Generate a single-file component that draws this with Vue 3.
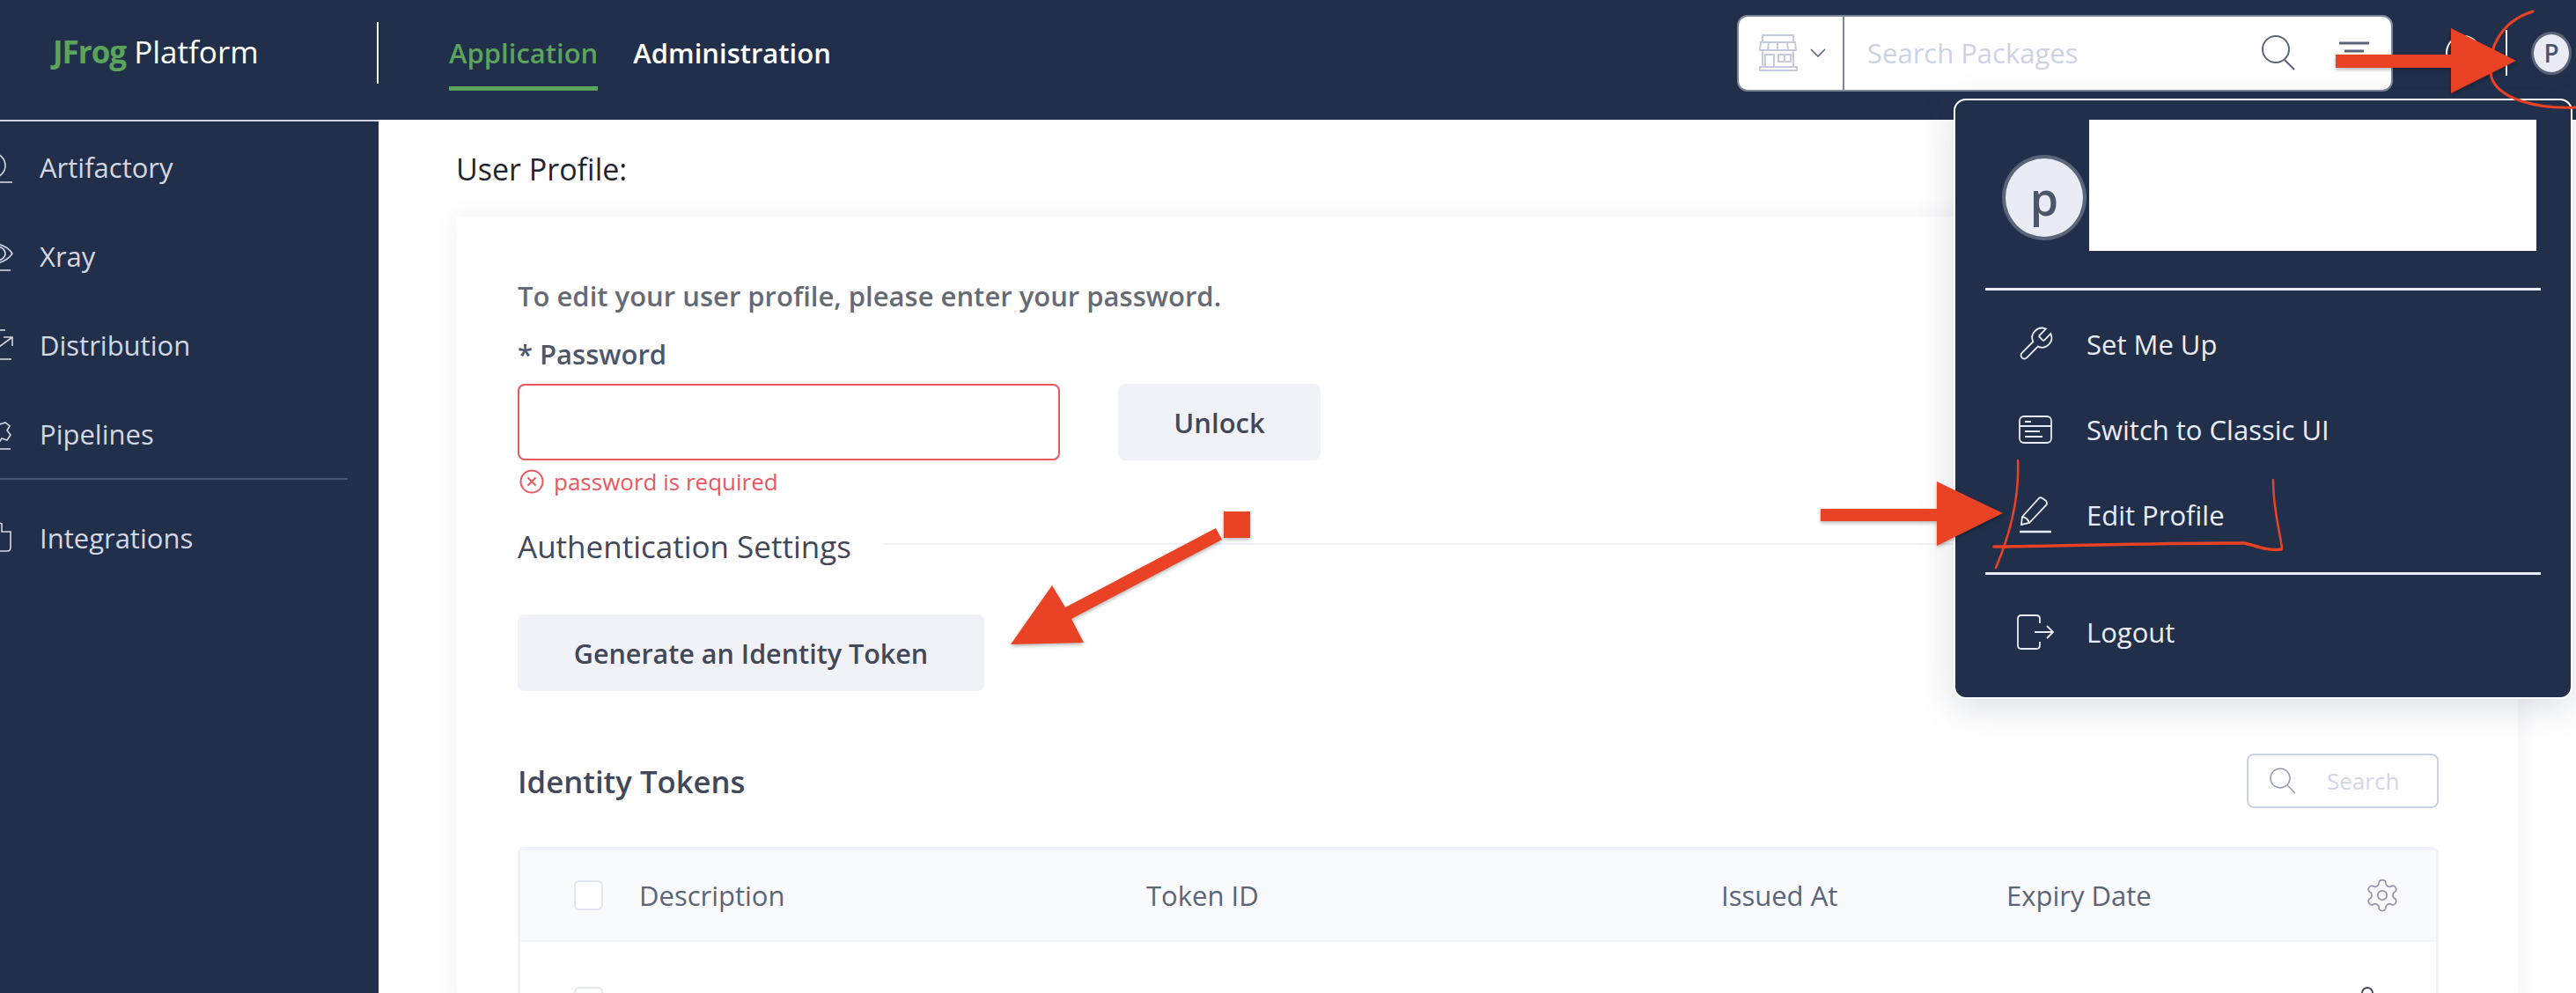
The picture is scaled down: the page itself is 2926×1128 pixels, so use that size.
<script setup>
const sideItems = [
  { label: "Artifactory", paths: ["M-8 3a14 14 0 1 1 0 28", "M-16 36H14"] },
  { label: "Xray", paths: ["M-14 4Q6 4 14 16Q6 28 -14 28", "M-4 8a10 8 0 1 1 0 16", "M-16 35H12"] },
  { label: "Distribution", paths: ["M-16 2H6", "M-8 26L14 10M4 10H14V20", "M-16 35H13"] },
  { label: "Pipelines", paths: ["M-8 2L-2 3L0 8L6 6L11 10L8 15L12 20L8 26L2 24L-2 30L-8 30", "M-8 9a7 7 0 1 1 0 14", "M-16 36H12"] },
]
const menuItems = [
  { label: "Set Me Up", icon: "wrench" },
  { label: "Switch to Classic UI", icon: "window" },
  { label: "Edit Profile", icon: "pencil" },
]
const columns = ["Description", "Token ID", "Issued At", "Expiry Date"]
const gearPath = "M12.22 2h-.44a2 2 0 0 0-2 2v.18a2 2 0 0 1-1 1.73l-.43.25a2 2 0 0 1-2 0l-.15-.08a2 2 0 0 0-2.73.73l-.22.38a2 2 0 0 0 .73 2.73l.15.1a2 2 0 0 1 1 1.72v.51a2 2 0 0 1-1 1.74l-.15.09a2 2 0 0 0-.73 2.73l.22.38a2 2 0 0 0 2.73.73l.15-.08a2 2 0 0 1 2 0l.43.25a2 2 0 0 1 1 1.73V20a2 2 0 0 0 2 2h.44a2 2 0 0 0 2-2v-.18a2 2 0 0 1 1-1.73l.43-.25a2 2 0 0 1 2 0l.15.08a2 2 0 0 0 2.73-.73l.22-.39a2 2 0 0 0-.73-2.73l-.15-.08a2 2 0 0 1-1-1.74v-.5a2 2 0 0 1 1-1.74l.15-.09a2 2 0 0 0 .73-2.73l-.22-.38a2 2 0 0 0-2.73-.73l-.15.08a2 2 0 0 1-2 0l-.43-.25a2 2 0 0 1-1-1.73V4a2 2 0 0 0-2-2z"
</script>

<template>
  <div class="page">
    <!-- top bar -->
    <header class="topbar">
      <div class="logo"><b>JFrog</b> Platform</div>
      <span class="vline tall"></span>
      <nav class="tabs">
        <a class="tab active">Application</a>
        <a class="tab">Administration</a>
      </nav>

      <div class="pkg-search">
        <div class="pkg-type">
          <svg width="44" height="42" viewBox="0 0 44 42" fill="none" stroke="#c6cade" stroke-width="2">
            <path d="M4 1H39V9H4ZM2 9H41L42 18H1ZM4 18V37M39 18V37M1 37H43V41H1Z" />
            <path d="M7 37V23H17V37M22 23H36V31H22ZM29 23V31M11 9L10 18M21 9V18M32 9L33 18" />
          </svg>
          <svg width="18" height="10" viewBox="0 0 18 10" fill="none" stroke="#5b6478" stroke-width="1.6">
            <path d="M1 1L9 9L17 1" />
          </svg>
        </div>
        <span class="pkg-placeholder">Search Packages</span>
        <svg class="pkg-glass" width="42" height="40" viewBox="0 0 42 40" fill="none" stroke="#5b6478" stroke-width="2">
          <circle cx="17" cy="16" r="15" />
          <path d="M27 28L38 39" />
        </svg>
        <svg class="pkg-filter" width="36" height="28" viewBox="0 0 36 28" fill="none" stroke="#5b6478" stroke-width="3">
          <path d="M1 3H35M7 12H29M12 21H24" />
        </svg>
      </div>

      <span class="help"></span>
      <span class="vline short"></span>
      <span class="avatar small">P</span>
    </header>

    <div class="body">
      <!-- left nav, icons cut off by the window edge -->
      <aside class="sidebar">
        <div v-for="item in sideItems" :key="item.label" class="side-item">
          <svg width="32" height="38" viewBox="-16 0 32 38" fill="none" stroke="#d3d7e2" stroke-width="1.6">
            <path v-for="d in item.paths" :key="d" :d="d" />
          </svg>
          <span>{{ item.label }}</span>
        </div>
        <div class="side-sep"></div>
        <div class="side-item">
          <svg width="32" height="38" viewBox="-16 0 32 38" fill="none" stroke="#d3d7e2" stroke-width="1.6">
            <path d="M-16 12H-6V3Q-2 1 2 3V12H12V30Q12 34 8 34H-16" />
          </svg>
          <span>Integrations</span>
        </div>
      </aside>

      <main class="main">
        <h1 class="title">User Profile:</h1>
        <section class="card">
          <p class="hint">To edit your user profile, please enter your password.</p>
          <label class="field-label">* Password</label>
          <div class="pw-row">
            <div class="pw-input"></div>
            <button class="btn unlock">Unlock</button>
          </div>
          <div class="error">
            <svg width="28" height="28" viewBox="0 0 28 28" fill="none" stroke="#e9585f" stroke-width="2">
              <circle cx="14" cy="14" r="12.5" />
              <path d="M9.5 9.5L18.5 18.5M18.5 9.5L9.5 18.5" />
            </svg>
            <span>password is required</span>
          </div>

          <div class="auth-head">
            <h2>Authentication Settings</h2>
            <span class="auth-line"></span>
          </div>
          <button class="btn generate">Generate an Identity Token</button>

          <div class="tokens-head">
            <h3>Identity Tokens</h3>
            <div class="mini-search">
              <svg width="30" height="30" viewBox="0 0 30 30" fill="none" stroke="#9b9fb8" stroke-width="1.6">
                <circle cx="12" cy="12" r="11" />
                <path d="M20 20L29 29" />
              </svg>
              <span>Search</span>
            </div>
          </div>

          <div class="table">
            <div class="row head">
              <span class="check"></span>
              <span v-for="c in columns" :key="c">{{ c }}</span>
              <svg class="gear" width="42" height="42" viewBox="0 0 24 24" fill="none" stroke="#9195ae" stroke-width="1">
                <path :d="gearPath" />
                <circle cx="12" cy="12" r="3" />
              </svg>
            </div>
            <div class="row">
              <span class="check"></span>
              <span class="kebab"></span>
            </div>
          </div>
        </section>
      </main>
    </div>

    <!-- account dropdown -->
    <div class="dropdown">
      <div class="dd-head">
        <span class="avatar large">p</span>
        <div class="dd-blank"></div>
      </div>
      <div class="dd-sep first"></div>
      <div v-for="m in menuItems" :key="m.label" class="dd-item">
        <span class="dd-icon">
          <svg v-if="m.icon === 'wrench'" width="48" height="48" viewBox="0 0 24 24" fill="none" stroke="#e9ecf5" stroke-width="1">
            <path d="M14.7 6.3a1 1 0 0 0 0 1.4l1.6 1.6a1 1 0 0 0 1.4 0l3.77-3.77a6 6 0 0 1-7.94 7.94l-6.91 6.91a2.12 2.12 0 0 1-3-3l6.91-6.91a6 6 0 0 1 7.94-7.94l-3.76 3.76z" />
          </svg>
          <svg v-else-if="m.icon === 'window'" width="38" height="32" viewBox="0 0 38 32" fill="none" stroke="#e9ecf5" stroke-width="1.8">
            <rect x="1" y="1" width="36" height="30" rx="5" />
            <path d="M1 12H37M7 7H14M7 18H24M7 24H27" />
          </svg>
          <svg v-else width="38" height="42" viewBox="0 0 38 42" fill="none" stroke="#e9ecf5" stroke-width="1.8">
            <path d="M4 23L22 3Q24 0 27 2L31 5Q33 8 31 10L12 30L3 32Z" />
            <path d="M4 23Q10 24 12 30" />
            <path d="M1 40H37" stroke-width="2.4" />
          </svg>
        </span>
        <span>{{ m.label }}</span>
      </div>
      <div class="dd-sep last"></div>
      <div class="dd-item">
        <span class="dd-icon">
          <svg width="44" height="40" viewBox="0 0 44 40" fill="none" stroke="#e9ecf5" stroke-width="1.8">
            <path d="M27 10V5Q27 1 23 1H6Q2 1 2 5V35Q2 39 6 39H23Q27 39 27 35V31" />
            <path d="M21 20H42M35 13L42 20L35 27" />
          </svg>
        </span>
        <span>Logout</span>
      </div>
    </div>

    <!-- red markup drawn on top of the screenshot -->
    <svg class="markup" width="2926" height="1128" viewBox="0 0 2926 1128">
      <g fill="#e94225" class="arrows">
        <path d="M2653 62H2784V32L2858 69L2784 106V77H2653Z" />
        <path d="M2068 578H2200V547L2275 583L2200 620V592H2068Z" />
        <path d="M1390 581H1420V611H1390Z" />
        <path d="M1381 600L1388 613L1217 703L1231 730L1148 732L1195 665L1210 690Z" />
      </g>
      <g fill="none" stroke="#e94225" stroke-linecap="round">
        <path d="M2877 13C2838 25 2824 60 2830 88C2838 112 2880 124 2926 122" stroke-width="3" />
        <path d="M2292 523C2294 570 2282 610 2267 645" stroke-width="2.5" />
        <path d="M2265 621C2350 620 2480 616 2550 617C2562 620 2575 626 2591 624" stroke-width="3.5" />
        <path d="M2582 545C2582 580 2590 605 2592 623" stroke-width="2.5" />
      </g>
    </svg>
  </div>
</template>

<style>
html, body {
  margin: 0;
  background: #fff;
}
</style>

<style scoped>
* {
  box-sizing: border-box;
}

.page {
  position: relative;
  width: 2926px;
  height: 1128px;
  overflow: hidden;
  font-family: "Open Sans", "Liberation Sans", sans-serif;
  font-size: 31px;
  color: #414859;
}

/* top bar */
.topbar {
  height: 136px;
  padding: 0 5px 16px 60px;
  display: flex;
  align-items: center;
  background: #212f4b;
}
.logo {
  width: 368px;
  margin-top: -4px;
  font-size: 35px;
  color: #fff;
  white-space: pre;
}
.logo b {
  color: #5aa45c;
  font-weight: 700;
  letter-spacing: -1px;
}
.vline {
  width: 2px;
  background: #fff;
  flex: none;
}
.vline.tall {
  height: 70px;
}
.vline.short {
  height: 52px;
  margin-left: 28px;
}
.tabs {
  display: flex;
  gap: 40px;
  margin-left: 80px;
}
.tab {
  height: 86px;
  padding-top: 5px;
  display: flex;
  align-items: center;
  border-bottom: 5px solid transparent;
  color: #fff;
  font-size: 31px;
  font-weight: 600;
}
.tab.active {
  color: #5aa45c;
  border-bottom-color: #5aa45c;
}
.pkg-search {
  width: 745px;
  height: 87px;
  margin-left: auto;
  display: flex;
  align-items: center;
  background: #fff;
  border: 2px solid #7d8599;
  border-radius: 12px;
}
.pkg-type {
  width: 120px;
  height: 100%;
  padding-left: 23px;
  display: flex;
  align-items: center;
  gap: 14px;
  border-right: 2px solid #7d8599;
}
.pkg-placeholder {
  margin-left: 26px;
  color: #ced2e4;
  font-size: 31px;
}
.pkg-glass {
  margin-left: auto;
}
.pkg-filter {
  margin: 0 24px 0 46px;
}
.help {
  width: 40px;
  height: 40px;
  margin-left: 60px;
  border: 2px solid #fff;
  border-radius: 50%;
}
.avatar {
  flex: none;
  display: flex;
  align-items: center;
  justify-content: center;
  border-radius: 50%;
  background: #e9ecf5;
  color: #4c566b;
  font-weight: 600;
}
.avatar.small {
  width: 46px;
  height: 49px;
  margin-left: 27px;
  border: 3px solid #5b6478;
  font-size: 28px;
}
.avatar.large {
  width: 96px;
  height: 97px;
  margin-top: 40px;
  border: 4px solid #5b6478;
  font-size: 52px;
}

/* sidebar + content */
.body {
  height: 992px;
  display: flex;
}
.sidebar {
  width: 430px;
  flex: none;
  padding-top: 1px;
  overflow: hidden;
  background: #212f4b;
  border-top: 2px solid #cfd3dc;
}
.side-item {
  height: 101px;
  display: flex;
  align-items: center;
  gap: 29px;
  color: #d3d7e2;
  font-size: 31px;
}
.side-item svg {
  margin-left: -16px;
  flex: none;
}
.side-sep {
  width: 395px;
  height: 2px;
  margin-bottom: 15px;
  background: #4a556d;
}
.main {
  flex: 1;
  min-width: 0;
  padding: 0 66px 0 88px;
}
.title {
  margin: 0;
  height: 110px;
  padding-top: 34px;
  font-size: 34px;
  line-height: 44px;
  font-weight: 400;
  color: #1f2430;
}
.card {
  height: 900px;
  padding: 70px 90px 0 70px;
  background: #fff;
  box-shadow: 0 0 24px rgba(60, 70, 100, 0.08);
}
.hint {
  margin: 0;
  height: 40px;
  line-height: 40px;
  color: #666a75;
  font-size: 31px;
  font-weight: 600;
}
.field-label {
  display: block;
  margin-top: 26px;
  height: 40px;
  line-height: 40px;
  color: #4c566b;
  font-weight: 600;
}
.pw-row {
  display: flex;
  gap: 66px;
  margin-top: 14px;
}
.pw-input {
  width: 616px;
  height: 87px;
  border: 2px solid #e9585f;
  border-radius: 8px;
}
.btn {
  display: block;
  border: 0;
  border-radius: 8px;
  background: #f1f2f8;
  color: #414859;
  font-family: inherit;
  font-size: 31px;
  font-weight: 600;
}
.generate {
  width: 530px;
  height: 87px;
  margin-top: 56px;
  font-size: 30.5px;
}
.unlock {
  width: 230px;
  height: 87px;
}
.error {
  display: flex;
  align-items: center;
  gap: 11px;
  height: 30px;
  margin: 9px 0 0 2px;
  color: #e9585f;
  font-size: 26px;
}
.auth-head {
  display: flex;
  align-items: center;
  gap: 35px;
  margin-top: 36px;
  height: 44px;
}
.auth-head h2 {
  margin: 0;
  font-size: 35px;
  font-weight: 400;
  color: #414859;
}
.auth-line {
  flex: 1;
  height: 2px;
  margin-top: -4px;
  background: #f1f2f8;
}
.tokens-head {
  display: flex;
  align-items: center;
  justify-content: space-between;
  margin-top: 71px;
  height: 62px;
}
.tokens-head h3 {
  margin: 0;
  font-size: 34.7px;
  font-weight: 600;
  color: #414859;
}
.mini-search {
  width: 218px;
  height: 62px;
  padding-left: 24px;
  display: flex;
  align-items: center;
  gap: 35px;
  border: 2px solid #cdd1e4;
  border-radius: 8px;
  color: #d2d6e6;
  font-size: 26px;
}
.table {
  margin-top: 44px;
  border: 3px solid #f1f2f8;
  border-top-width: 4px;
  border-bottom: 0;
  border-radius: 8px 8px 0 0;
}
.row {
  display: grid;
  grid-template-columns: 74px 576px 653px 324px 1fr auto;
  align-items: center;
  padding-left: 61px;
}
.row.head {
  height: 104px;
  background: #f9fafc;
  border-bottom: 2px solid #f1f2f8;
  color: #5b6478;
  font-size: 31px;
}
.row:not(.head) {
  height: 120px;
  align-items: start;
  padding-top: 51px;
}
.check {
  width: 33px;
  height: 34px;
  background: #fff;
  border: 2px solid #e4e6f2;
  border-radius: 6px;
}
.gear {
  margin-right: 40px;
}
.kebab {
  grid-column: 6;
  width: 14px;
  height: 14px;
  margin-right: 71px;
  border: 2px solid #414859;
  border-radius: 50%;
}

/* dropdown */
.dropdown {
  position: absolute;
  top: 112px;
  left: 2219px;
  width: 703px;
  height: 682px;
  padding: 22px 34px 0;
  background: #212f4b;
  border: 2px solid #fff;
  border-radius: 14px;
  box-shadow: 0 8px 40px rgba(50, 60, 90, 0.18);
  color: #e9ecf5;
  font-size: 31px;
}
.dd-head {
  display: flex;
  align-items: flex-start;
  gap: 3px;
  margin-left: 19px;
}
.dd-blank {
  width: 508px;
  height: 149px;
  background: #fff;
}
.dd-sep {
  height: 3px;
  margin-bottom: 12px;
  background: #e9ecf5;
}
.dd-sep.first {
  margin-top: 42px;
}
.dd-sep.last {
  margin-top: 17px;
  margin-bottom: 16px;
}
.dd-item {
  height: 97px;
  display: flex;
  align-items: center;
  gap: 36px;
  padding-left: 35px;
}
.dd-icon {
  width: 44px;
  display: flex;
  justify-content: center;
}
.markup {
  position: absolute;
  inset: 0;
  pointer-events: none;
}
.arrows path {
  filter: drop-shadow(0 2px 2px rgba(0, 0, 0, 0.3));
}
</style>
